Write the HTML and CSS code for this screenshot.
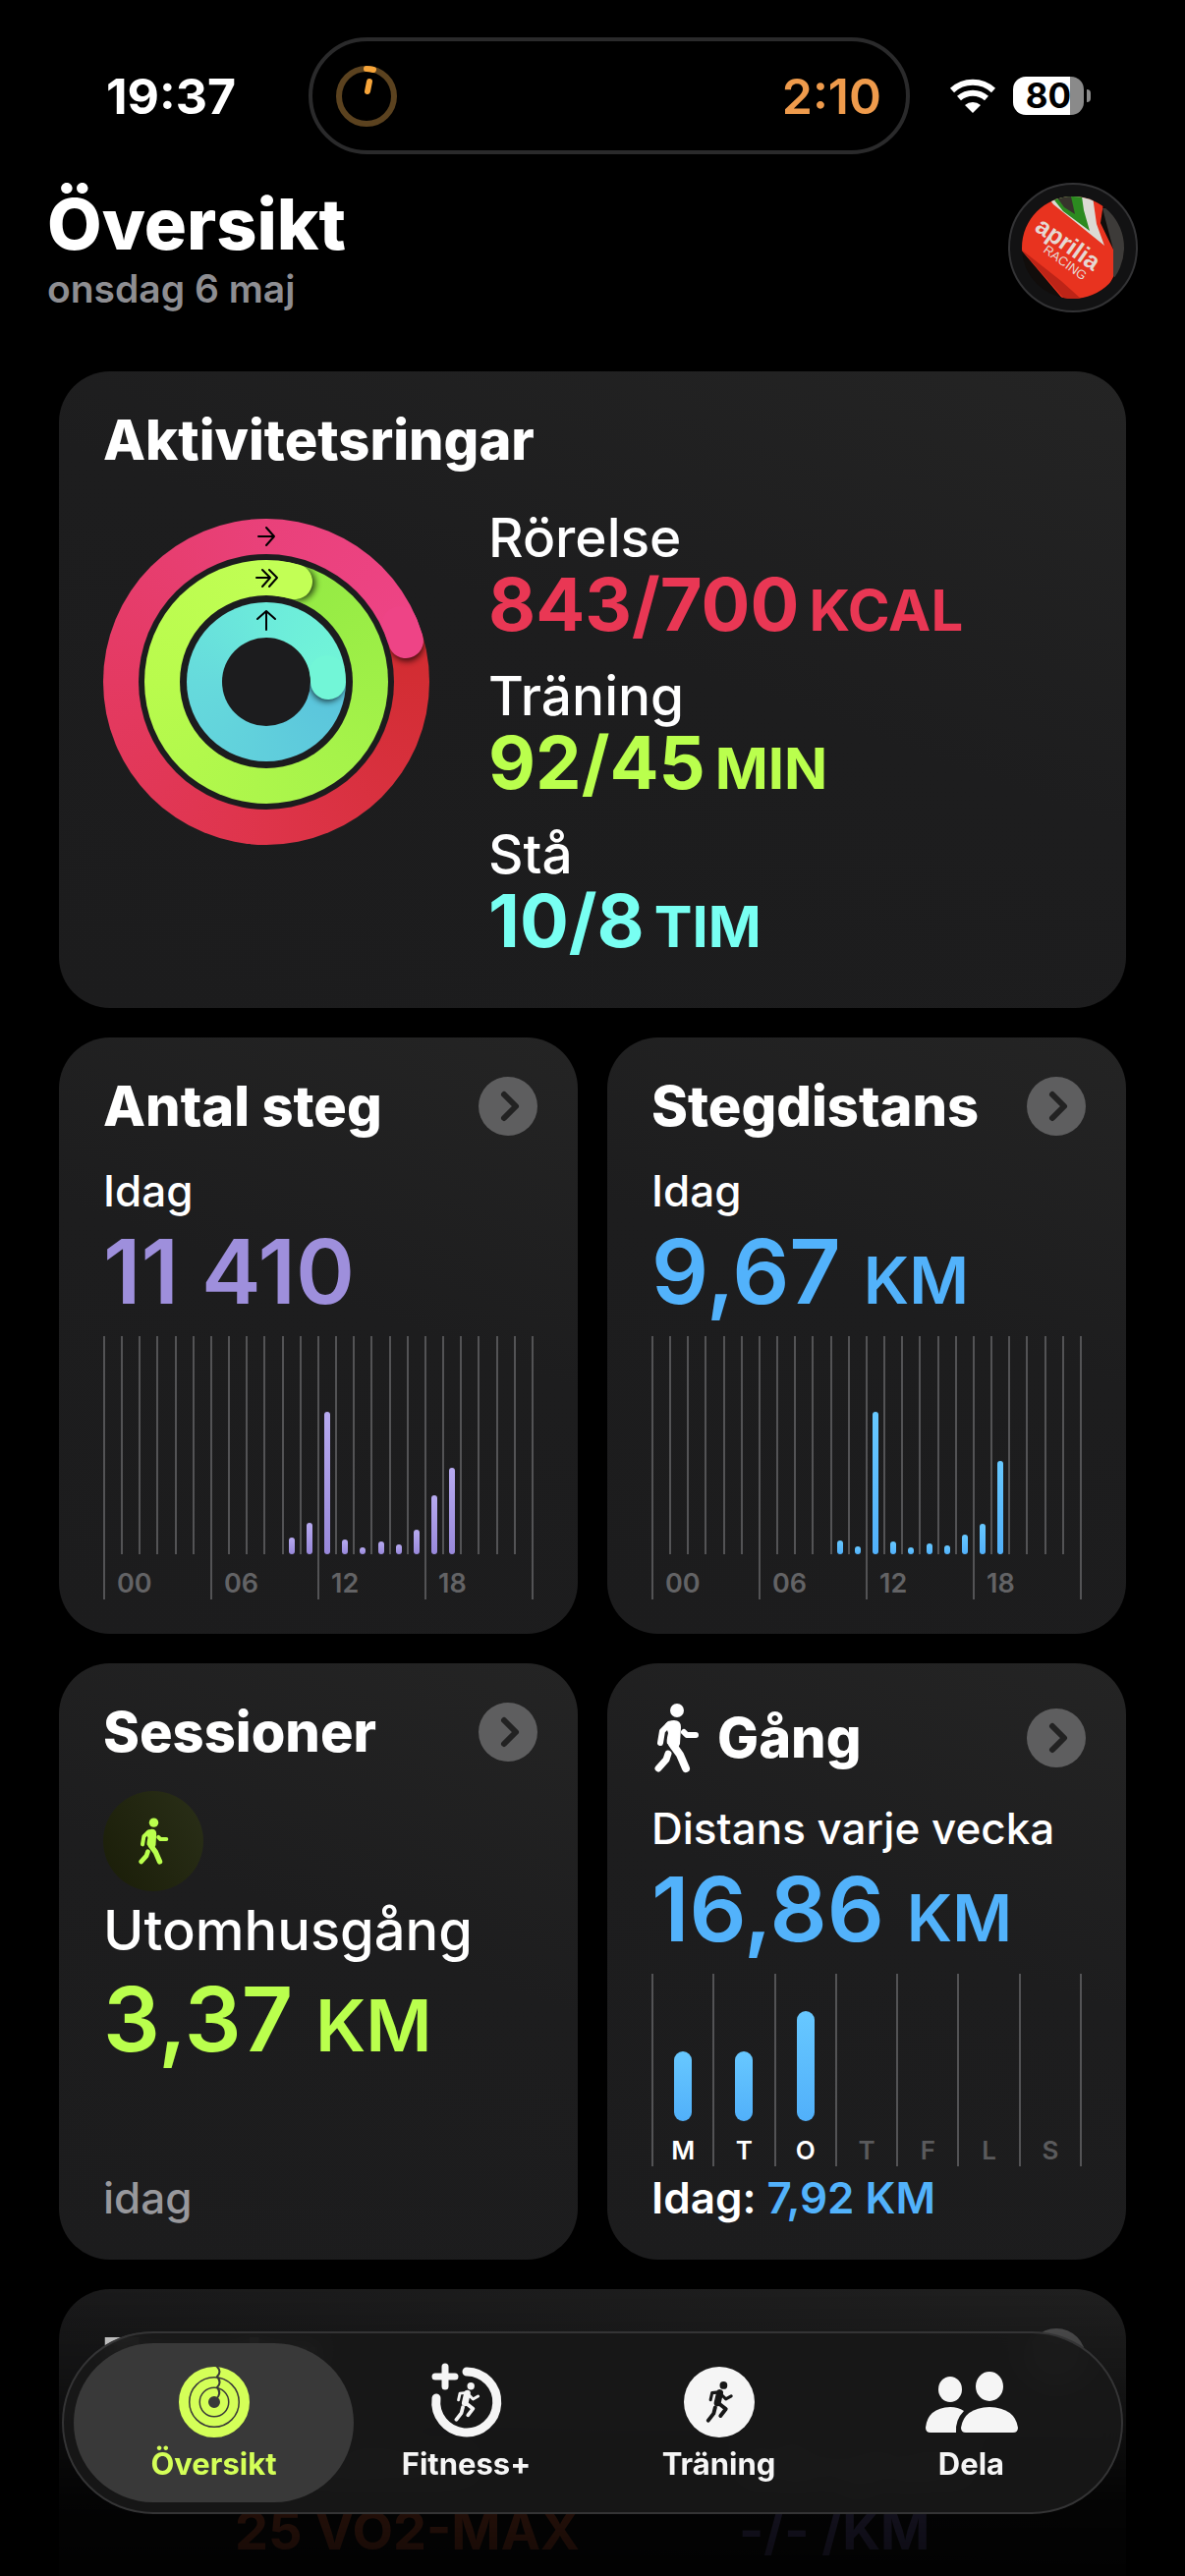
FILE: index.html
```
<!DOCTYPE html>
<html lang="sv">

<head>
    <meta charset="utf-8">
    <meta name="viewport" content="width=device-width, initial-scale=1">
    <title>Översikt</title>
    <link rel="stylesheet" href="styles.css">
</head>

<body>
    <svg class="defs" width="0" height="0" aria-hidden="true">
        <symbol id="walk" viewBox="0 0 46 72">
            <circle cx="23" cy="8" r="7" />
            <path class="solid" d="M11 22Q14 18 20 18Q27 18 27 25L26 42L24 46L13 42Q12 39 14 31Z" />
            <path d="M15 22L8 29L6 41M30 30L33 33L42 33" stroke-width="6" />
            <path d="M18 42L26 53L32 67" stroke-width="8" />
            <path d="M14 52L12 58L4 67" stroke-width="7" />
        </symbol>
        <symbol id="run" viewBox="0 0 36 54">
            <circle cx="23" cy="5" r="5" />
            <path d="M18 15L15 28" stroke-width="9" />
            <path d="M17 14L8 15L6 24M21 18L26 23L33 19" stroke-width="4" />
            <path d="M17 29L26 36L19 45" stroke-width="5" />
            <path d="M12 34L10 42L3 51" stroke-width="5" />
        </symbol>
        <symbol id="chevron" viewBox="0 0 60 60">
            <circle cx="30" cy="30" r="30" fill="#5e5e5f" />
            <path d="M26 18L38 30L26 42" fill="none" stroke="#222" stroke-width="6" stroke-linecap="round" stroke-linejoin="round" />
        </symbol>
    </svg>

    <div class="status">
        <span class="clock">19:37</span>
        <div class="island">
            <svg class="timer" viewBox="0 0 64 64" aria-hidden="true">
                <circle cx="32" cy="32" r="28" stroke="#5b421f" />
                <path d="M32 4A28 28 0 0 1 39 5M35 17L33 27" stroke="#f7a53a" />
            </svg>
            <span>2:10</span>
        </div>
        <div class="signals">
            <svg class="wifi" viewBox="0 0 48 36" aria-hidden="true">
                <path d="M3 12A31 31 0 0 1 45 12M10 20A21 21 0 0 1 38 20" />
                <path d="M16 27A12 12 0 0 1 32 27L24 35Z" class="dot" />
            </svg>
            <span class="battery">80</span>
        </div>
    </div>

    <header class="top">
        <div>
            <h1>Översikt</h1>
            <p>onsdag 6 maj</p>
        </div>
        <button class="avatar" aria-label="Profil">
            <svg viewBox="0 0 104 104">
                <clipPath id="face"><circle cx="52" cy="52" r="52" /></clipPath>
                <g clip-path="url(#face)">
                    <rect width="104" height="104" fill="#110d0b" />
                    <path d="M82 12H104V92L92 80L93 54Z" fill="#3d3b39" />
                    <path d="M-2 53L0 0H84L80 27L93 54V82L80 106H43Z" fill="#e8331f" />
                    <path d="M-2 53L40 86L60 104H43Z" fill="#bd2417" />
                    <path d="M26 0L32 8L84 50L76 28L72 0Z" fill="#dcdad4" />
                    <path d="M30 0L42 15L69 35L63 14L61 0Z" fill="#2c8a20" />
                    <path d="M35 0L43 11L54 18L50 0Z" fill="#37332c" />
                    <text x="12" y="34" transform="rotate(35 12 34)" class="logo-big">aprilia</text>
                    <text x="21" y="56" transform="rotate(36 21 56)" class="logo-small">RACING</text>
                </g>
            </svg>
        </button>
    </header>

    <main>
        <section class="card activity">
            <h2>Aktivitetsringar</h2>
            <div class="activity-body">
                <div class="rings">
                    <div class="ring move">
                        <div class="gap">
                            <div class="ring exercise">
                                <div class="gap">
                                    <div class="ring stand">
                                        <div class="gap"></div>
                                    </div>
                                </div>
                            </div>
                        </div>
                    </div>
                    <svg class="ring-heads" viewBox="0 0 332 332" aria-hidden="true">
                        <defs>
                            <filter id="soft" x="-50%" y="-50%" width="200%" height="200%" filterUnits="objectBoundingBox"><feGaussianBlur stdDeviation="3" /></filter>
                            <clipPath id="c1"><path clip-rule="evenodd" d="M0 166a166 166 0 1 0 332 0a166 166 0 1 0 -332 0ZM36 166a130 130 0 1 0 260 0a130 130 0 1 0 -260 0Z" /></clipPath>
                            <clipPath id="c2"><path clip-rule="evenodd" d="M42 166a124 124 0 1 0 248 0a124 124 0 1 0 -248 0ZM78 166a88 88 0 1 0 176 0a88 88 0 1 0 -176 0Z" /></clipPath>
                            <clipPath id="c3"><path clip-rule="evenodd" d="M85 166a81 81 0 1 0 162 0a81 81 0 1 0 -162 0ZM121 166a45 45 0 1 0 90 0a45 45 0 1 0 -90 0Z" /></clipPath>
                        </defs>
                        <g clip-path="url(#c1)">
                            <circle cx="309" cy="128" r="17" class="shade" />
                            <path d="M302 107A148 148 0 0 1 308 124" stroke="#ee4486" class="head" />
                        </g>
                        <g clip-path="url(#c2)">
                            <circle cx="199" cy="66" r="17" class="shade" />
                            <path d="M178 61A106 106 0 0 1 195 64" stroke="#c2ff55" class="head" />
                        </g>
                        <g clip-path="url(#c3)">
                            <circle cx="228" cy="169" r="17" class="shade" />
                            <path d="M228 157A63 63 0 0 1 229 166" stroke="#72f6d7" class="head" />
                        </g>
                        <path class="arrows" d="M158 18H174M166 9L174 18L166 27M156 60H170M162 52L170 60L162 69M169 52L177 60L169 69M166 113V94M157 102L166 94L175 102" />
                    </svg>
                </div>
                <dl class="goals">
                    <dt>Rörelse</dt>
                    <dd class="red">843/700<small>KCAL</small></dd>
                    <dt>Träning</dt>
                    <dd class="green">92/45<small>MIN</small></dd>
                    <dt>Stå</dt>
                    <dd class="cyan">10/8<small>TIM</small></dd>
                </dl>
            </div>
        </section>

        <section class="card">
            <div class="card-head">
                <h2>Antal steg</h2>
                <button class="more" aria-label="Visa Antal steg"><svg><use href="#chevron" /></svg></button>
            </div>
            <p class="sub">Idag</p>
            <p class="value purple">11 410</p>
            <div class="day-chart purple" data-values="0,0,0,0,0,0,0,0,0,0,17,32,145,15,7,13,10,25,60,88,0,0,0,0"></div>
        </section>

        <section class="card">
            <div class="card-head">
                <h2>Stegdistans</h2>
                <button class="more" aria-label="Visa Stegdistans"><svg><use href="#chevron" /></svg></button>
            </div>
            <p class="sub">Idag</p>
            <p class="value blue">9,67 <small>KM</small></p>
            <div class="day-chart blue" data-values="0,0,0,0,0,0,0,0,0,0,14,8,145,13,7,11,9,20,31,95,0,0,0,0"></div>
        </section>

        <section class="card sessions">
            <div class="card-head">
                <h2>Sessioner</h2>
                <button class="more" aria-label="Visa Sessioner"><svg><use href="#chevron" /></svg></button>
            </div>
            <div class="badge"><svg class="glyph"><use href="#walk" /></svg></div>
            <p class="workout">Utomhusgång</p>
            <p class="value green">3,37 <small>KM</small></p>
            <p class="when">idag</p>
        </section>

        <section class="card walking">
            <div class="card-head">
                <h2><svg class="glyph"><use href="#walk" /></svg>Gång</h2>
                <button class="more" aria-label="Visa Gång"><svg><use href="#chevron" /></svg></button>
            </div>
            <p class="sub">Distans varje vecka</p>
            <p class="value blue">16,86 <small>KM</small></p>
            <div class="week-chart blue">
                <div class="on"><i style="height:71px"></i><span>M</span></div>
                <div class="on"><i style="height:71px"></i><span>T</span></div>
                <div class="on"><i style="height:112px"></i><span>O</span></div>
                <div><span>T</span></div>
                <div><span>F</span></div>
                <div><span>L</span></div>
                <div><span>S</span></div>
            </div>
            <p class="today">Idag: <b class="blue">7,92 KM</b></p>
        </section>

        <section class="card trends">
            <div class="card-head">
                <h2>Trender</h2>
                <button class="more" aria-label="Visa Trender"><svg><use href="#chevron" /></svg></button>
            </div>
            <dl class="trend-list">
                <div><dt>Kondition</dt><dd class="orange">25 VO2-MAX</dd></div>
                <div><dt>Gångtakt</dt><dd class="violet">-/- /KM</dd></div>
            </dl>
        </section>
    </main>

    <div class="fade"></div>

    <nav class="tabs">
        <a href="#" class="tab active" aria-current="page">
            <svg viewBox="0 0 72 72" fill="none" stroke="currentColor" stroke-linecap="round">
                <circle cx="36" cy="36" r="31" stroke-width="10" />
                <circle cx="36" cy="36" r="20" stroke-width="9" />
                <circle cx="36" cy="36" r="10" stroke-width="8" />
                <path d="M39 0Q44 5 39 10Q44 16 39 21Q44 27 38 33" stroke="#3a3a3a" stroke-width="2" />
            </svg>
            Översikt
        </a>
        <a href="#" class="tab">
            <svg viewBox="0 0 72 72" fill="none" stroke="currentColor" stroke-linecap="round">
                <path d="M36 5A31 31 0 1 1 5 32" stroke-width="9" />
                <path d="M14 0V20M4 10H24" stroke-width="7" />
                <use href="#run" class="glyph" x="22" y="16" width="29" height="40" />
            </svg>
            Fitness+
        </a>
        <a href="#" class="tab">
            <svg viewBox="0 0 72 72">
                <circle cx="36" cy="36" r="36" fill="currentColor" />
                <use href="#run" class="glyph dark" x="20" y="15" width="33" height="42" />
            </svg>
            Träning
        </a>
        <a href="#" class="tab">
            <svg class="people" viewBox="0 0 94 72" fill="currentColor">
                <ellipse cx="25" cy="23" rx="12" ry="13" />
                <ellipse cx="65" cy="20" rx="14" ry="15" />
                <path d="M5 67Q0 67 0 62Q2 42 25 41Q33 41 39 45Q30 54 31 67Z" />
                <path d="M41 67Q36 67 36 62Q39 42 65 41Q91 42 94 62Q94 67 89 67Z" />
            </svg>
            Dela
        </a>
    </nav>

    <script>
        var charts = document.getElementsByClassName("day-chart");
        for (var i = 0; i < charts.length; i++) {
            var values = charts[i].getAttribute("data-values").split(",");
            var html = "";
            for (var h = 0; h < values.length; h++) {
                html += "<div>";
                if (values[h] > 0) html += '<i style="height:' + values[h] + 'px"></i>';
                //var sjätte timme får en etikett
                if (h % 6 == 0) html += "<span>" + (h < 10 ? "0" + h : h) + "</span>";
                html += "</div>";
            }
            charts[i].innerHTML = html;
        }
    </script>
</body>

</html>
```
FILE: styles.css
```
* {
    box-sizing: border-box;
}

html,
body {
    height: 100%;
    overflow: hidden;
}

body,
h1,
h2,
p,
dl,
dd {
    margin: 0;
    padding: 0;
}

body {
    color: #fff;
    background: #000;
    font-family: Inter, "Liberation Sans", sans-serif;
}

button {
    border: 0;
    padding: 0;
    background: none;
    cursor: pointer;
}

svg {
    display: block;
}

.defs {
    position: absolute;
}

.red { color: #e93754; }
.green { color: #baff4d; }
.cyan { color: #78fff2; }
.purple { color: #9e8fdc; }
.blue { color: #52b2fb; }
.orange { color: #ff7043; }
.violet { color: #8c7fd6; }

.glyph {
    fill: currentColor;
    stroke: currentColor;
    stroke-width: 0;
    stroke-linecap: round;
    stroke-linejoin: round;
}

#walk path,
#run path {
    fill: none;
}

#walk .solid {
    fill: currentColor;
}

/* status bar */
.status {
    display: grid;
    grid-template-columns: 1fr 612px 1fr;
    padding: 38px 0 0 34px;
}

.clock {
    align-self: center;
    justify-self: center;
    font-size: 50px;
    font-weight: 700;
}

.island {
    display: flex;
    align-items: center;
    justify-content: space-between;
    height: 119px;
    padding: 0 25px 0 23px;
    border: 4px solid #2a2a2b;
    border-radius: 60px;
    color: #ef9b4c;
    font-size: 50px;
    font-weight: 600;
}

.timer {
    width: 64px;
    height: 64px;
    fill: none;
    stroke-width: 6px;
    stroke-linecap: round;
}

.signals {
    display: flex;
    align-items: center;
    gap: 17px;
    padding-left: 40px;
}

.wifi {
    width: 48px;
    height: 36px;
    fill: none;
    stroke: #fff;
    stroke-width: 6px;
}

.wifi .dot {
    fill: #fff;
    stroke: none;
}

.battery {
    position: relative;
    width: 72px;
    height: 39px;
    border-radius: 13px;
    background: linear-gradient(90deg, #fff 80%, #8a8a8a 80%);
    color: #000;
    font-size: 35px;
    font-weight: 700;
    line-height: 39px;
    text-align: center;
}

.battery::after {
    content: "";
    position: absolute;
    top: 13px;
    right: -7px;
    width: 4px;
    height: 13px;
    border-radius: 0 6px 6px 0;
    background: #8a8a8a;
}

/* page heading */
.top {
    display: flex;
    justify-content: space-between;
    align-items: center;
    height: 132px;
    margin: 29px 48px 60px;
}

.top > div {
    padding-top: 4px;
}

.top h1 {
    font-size: 72px;
    font-weight: 800;
    line-height: 80px;
}

.top p {
    color: #8e8e92;
    font-size: 39px;
    font-weight: 600;
    line-height: 52px;
}

.avatar {
    width: 132px;
    height: 132px;
    padding: 12px;
    border: 2px solid #333335;
    border-radius: 50%;
    background: #121213;
}

.avatar text {
    fill: #e6d8d2;
}

.logo-big {
    font-size: 25px;
    font-weight: 700;
}

.logo-small {
    font-size: 13px;
    font-weight: 500;
}

/* cards */
main {
    display: grid;
    grid-template-columns: 1fr 1fr;
    gap: 30px;
    padding: 0 60px;
}

.card {
    min-height: 607px;
    padding: 40px 41px 34px 45px;
    border-radius: 52px;
    background: linear-gradient(200deg, #242424, #1d1d1e 45%, #1c1c1d);
}

.card h2 {
    font-size: 56px;
    font-weight: 800;
    line-height: 60px;
}

.card-head {
    display: flex;
    justify-content: space-between;
    align-items: center;
}

.more,
.more svg {
    width: 60px;
    height: 60px;
}

.activity,
.trends {
    grid-column: span 2;
}

.activity {
    min-height: 648px;
}

.activity-body {
    display: flex;
    align-items: flex-start;
    gap: 60px;
}

.rings {
    position: relative;
    margin-top: 50px;
}

.ring,
.gap {
    display: flex;
    align-items: center;
    justify-content: center;
    border-radius: 50%;
}

.gap {
    background: #1c1c1e;
}

.move {
    width: 332px;
    height: 332px;
    background: conic-gradient(from 73deg, #d12c30, #de344a 107deg, #e43a62 197deg, #e9417a 287deg, #ee4486);
}

.move > .gap {
    width: 260px;
    height: 260px;
}

.exercise {
    width: 248px;
    height: 248px;
    background: conic-gradient(from 16deg, #94ea44, #a6f34a 120deg, #b9fb4d 254deg, #c2ff55);
}

.exercise > .gap {
    width: 176px;
    height: 176px;
}

.stand {
    width: 162px;
    height: 162px;
    background: conic-gradient(from 90deg, #5ac3dc, #66dadc 180deg, #6cebdb 270deg, #72f6d7);
}

.stand > .gap {
    width: 90px;
    height: 90px;
}

.ring-heads {
    position: absolute;
    top: 0;
    left: 0;
    width: 332px;
    height: 332px;
    fill: none;
}

.head {
    stroke-width: 36px;
    stroke-linecap: round;
}

.shade {
    fill: #000;
    opacity: .7;
    filter: url(#soft);
}

.arrows {
    stroke: #000;
    stroke-width: 2px;
    stroke-linecap: round;
    stroke-linejoin: round;
}

.goals {
    margin-top: 34px;
}

.goals dt {
    font-size: 55px;
    font-weight: 500;
    line-height: 70px;
}

.goals dd {
    margin-bottom: 25px;
    font-size: 74px;
    font-weight: 700;
    line-height: 66px;
}

.goals dd:last-child {
    margin-bottom: 0;
}

.goals small {
    margin-left: 10px;
    font-size: 58px;
    line-height: 1px;
}

.sub {
    margin-top: 28px;
    font-size: 44px;
    font-weight: 500;
    line-height: 56px;
}

.value {
    font-size: 91px;
    font-weight: 600;
    line-height: 108px;
}

.value small {
    font-size: 66px;
    line-height: 1px;
}

/* charts */
.day-chart,
.week-chart {
    display: grid;
    margin-right: 4px;
    border-right: 2px solid #535355;
}

.day-chart {
    grid-template-columns: repeat(24, minmax(0, 1fr));
    height: 268px;
    margin-top: 12px;
}

.day-chart div {
    display: flex;
    align-items: flex-end;
    justify-content: center;
    height: 222px;
    border-left: 2px solid #535355;
}

.day-chart div:nth-child(6n+1) {
    position: relative;
    height: 268px;
    padding-bottom: 46px;
}

.day-chart span {
    position: absolute;
    bottom: 0;
    left: 12px;
    color: #636365;
    font-size: 27px;
    font-weight: 600;
    line-height: 32px;
}

.day-chart i {
    width: 6px;
    border-radius: 3px;
    background: currentColor;
}

.blue i {
    background: linear-gradient(#67c8ff, #51b0fa);
}

.purple i {
    background: linear-gradient(#b7aaf0, #9888da);
}

.week-chart {
    grid-template-columns: repeat(7, minmax(0, 1fr));
    height: 196px;
}

.week-chart div {
    display: flex;
    flex-direction: column;
    align-items: center;
    justify-content: flex-end;
    gap: 14px;
    border-left: 2px solid #535355;
    color: #5a5a5c;
}

.week-chart .on {
    color: #fff;
}

.week-chart i {
    width: 18px;
    border-radius: 9px;
}

.week-chart span {
    font-size: 26px;
    font-weight: 600;
    line-height: 32px;
}

/* sessions */
.sessions {
    display: flex;
    flex-direction: column;
}

.badge {
    display: flex;
    align-items: center;
    justify-content: center;
    width: 102px;
    height: 102px;
    margin-top: 30px;
    border-radius: 50%;
    background: linear-gradient(60deg, #1a1d08, #2a2f18);
    color: #baff4d;
}

.badge svg {
    width: 31px;
    height: 50px;
}

.workout {
    margin-top: 4px;
    font-size: 56px;
    font-weight: 500;
    line-height: 72px;
}

.sessions .value small {
    font-size: 73px;
}

.when {
    margin-top: auto;
    color: #98989c;
    font-size: 44px;
    font-weight: 500;
    line-height: 58px;
}

/* walking */
.walking {
    padding-bottom: 30px;
}

.walking h2 {
    display: flex;
    align-items: center;
    gap: 18px;
    line-height: 72px;
}

.walking h2 svg {
    width: 46px;
    height: 72px;
    margin-left: 3px;
}

.walking .value {
    margin-bottom: 12px;
}

.today {
    font-size: 44px;
    font-weight: 600;
    line-height: 64px;
}

.today b {
    font-weight: 600;
}

/* trends */
.trend-list {
    display: grid;
    grid-template-columns: 1fr 1fr;
    gap: 26px;
    padding-top: 50px;
    font-size: 54px;
    line-height: 64px;
}

.trend-list div {
    padding-left: 134px;
}

.trend-list dt {
    font-weight: 500;
}

.trend-list dd {
    font-weight: 700;
}

.fade {
    position: fixed;
    right: 0;
    bottom: 0;
    left: 0;
    height: 300px;
    background: linear-gradient(rgba(0, 0, 0, .1), rgba(0, 0, 0, .35) 30%, rgba(0, 0, 0, .86) 75%, rgba(0, 0, 0, .92));
}

/* tab bar */
.tabs {
    position: fixed;
    right: 63px;
    bottom: 63px;
    left: 63px;
    display: flex;
    height: 186px;
    padding: 10px 24px;
    border: 2px solid #343435;
    border-radius: 93px;
    background: rgba(24, 24, 24, .92);
    backdrop-filter: blur(12px);
}

.tab {
    display: flex;
    flex: 1;
    flex-direction: column;
    align-items: center;
    margin: 0 -14px;
    padding-top: 24px;
    border-radius: 81px;
    color: #f5f5f5;
    font-size: 31px;
    font-weight: 700;
    line-height: 48px;
    text-decoration: none;
}

.tab svg {
    width: 72px;
    height: 72px;
    margin-bottom: 3px;
    overflow: visible;
}

.tab .people {
    width: 94px;
}

.tab .dark {
    color: #171717;
}

.tab.active {
    background: #393939;
    color: #d4ff58;
}
```
